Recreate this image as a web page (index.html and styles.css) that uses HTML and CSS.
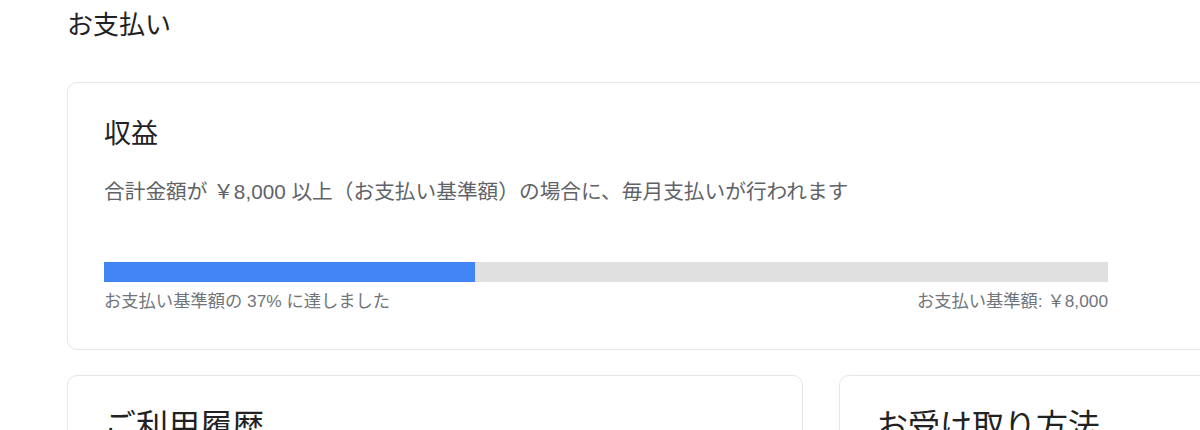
FILE: index.html
```html
<!DOCTYPE html>
<html lang="ja">
<head>
<meta charset="utf-8">
<title>お支払い</title>
<link rel="stylesheet" href="styles.css">
</head>
<body>
<div class="page">
  <h1 class="page-title">お支払い</h1>
  <section class="card card-wide">
    <h2 class="card-title">収益</h2>
    <p class="desc">合計金額が ￥8,000 以上（お支払い基準額）の場合に、毎月支払いが行われます</p>
    <div class="progress">
      <div class="progress-fill" style="width:37%"></div>
    </div>
    <div class="progress-labels">
      <span>お支払い基準額の 37% に達しました</span>
      <span>お支払い基準額: ￥8,000</span>
    </div>
  </section>
  <div class="row">
    <section class="card card-half">
      <h2 class="card-title-lg">ご利用履歴</h2>
    </section>
    <section class="card card-half">
      <h2 class="card-title-lg">お受け取り方法</h2>
    </section>
  </div>
</div>
</body>
</html>
```
FILE: styles.css
```css
html, body {
  margin: 0;
  padding: 0;
  background: #ffffff;
  overflow: hidden;
}
body {
  font-family: "Liberation Sans", "Noto Sans CJK JP", sans-serif;
  color: #222222;
}
.page {
  width: 1200px;
  height: 430px;
  overflow: hidden;
  padding: 7px 0 0 67px;
  box-sizing: border-box;
}
.page-title {
  margin: 0;
  font-size: 26px;
  line-height: 36px;
  font-weight: 400;
  color: #222222;
}
.card {
  border: 1px solid #e6e6e6;
  border-radius: 10px;
  background: #ffffff;
  box-sizing: border-box;
  padding: 0 36px;
  flex-shrink: 0;
}
.card-wide {
  margin-top: 39px;
  width: 1180px;
  padding-top: 32px;
  padding-bottom: 36px;
}
.card-title {
  margin: 0;
  font-size: 27px;
  line-height: 38px;
  font-weight: 400;
  color: #222222;
}
.desc {
  margin: 24px 0 0;
  font-size: 20.7px;
  line-height: 30px;
  color: #5f6368;
}
.progress {
  margin-top: 55px;
  width: 1004px;
  height: 20px;
  background: #e0e0e0;
}
.progress-fill {
  height: 100%;
  background: #4285f4;
}
.progress-labels {
  width: 1004px;
  margin-top: 8px;
  display: flex;
  justify-content: space-between;
  font-size: 17.3px;
  line-height: 23px;
  color: #70757a;
}
.row {
  display: flex;
  gap: 36px;
  margin-top: 25px;
}
.card-half {
  width: 736px;
  height: 200px;
  padding-top: 28px;
}
.card-title-lg {
  margin: 0;
  font-size: 32px;
  line-height: 44px;
  font-weight: 400;
  color: #222222;
}
```
